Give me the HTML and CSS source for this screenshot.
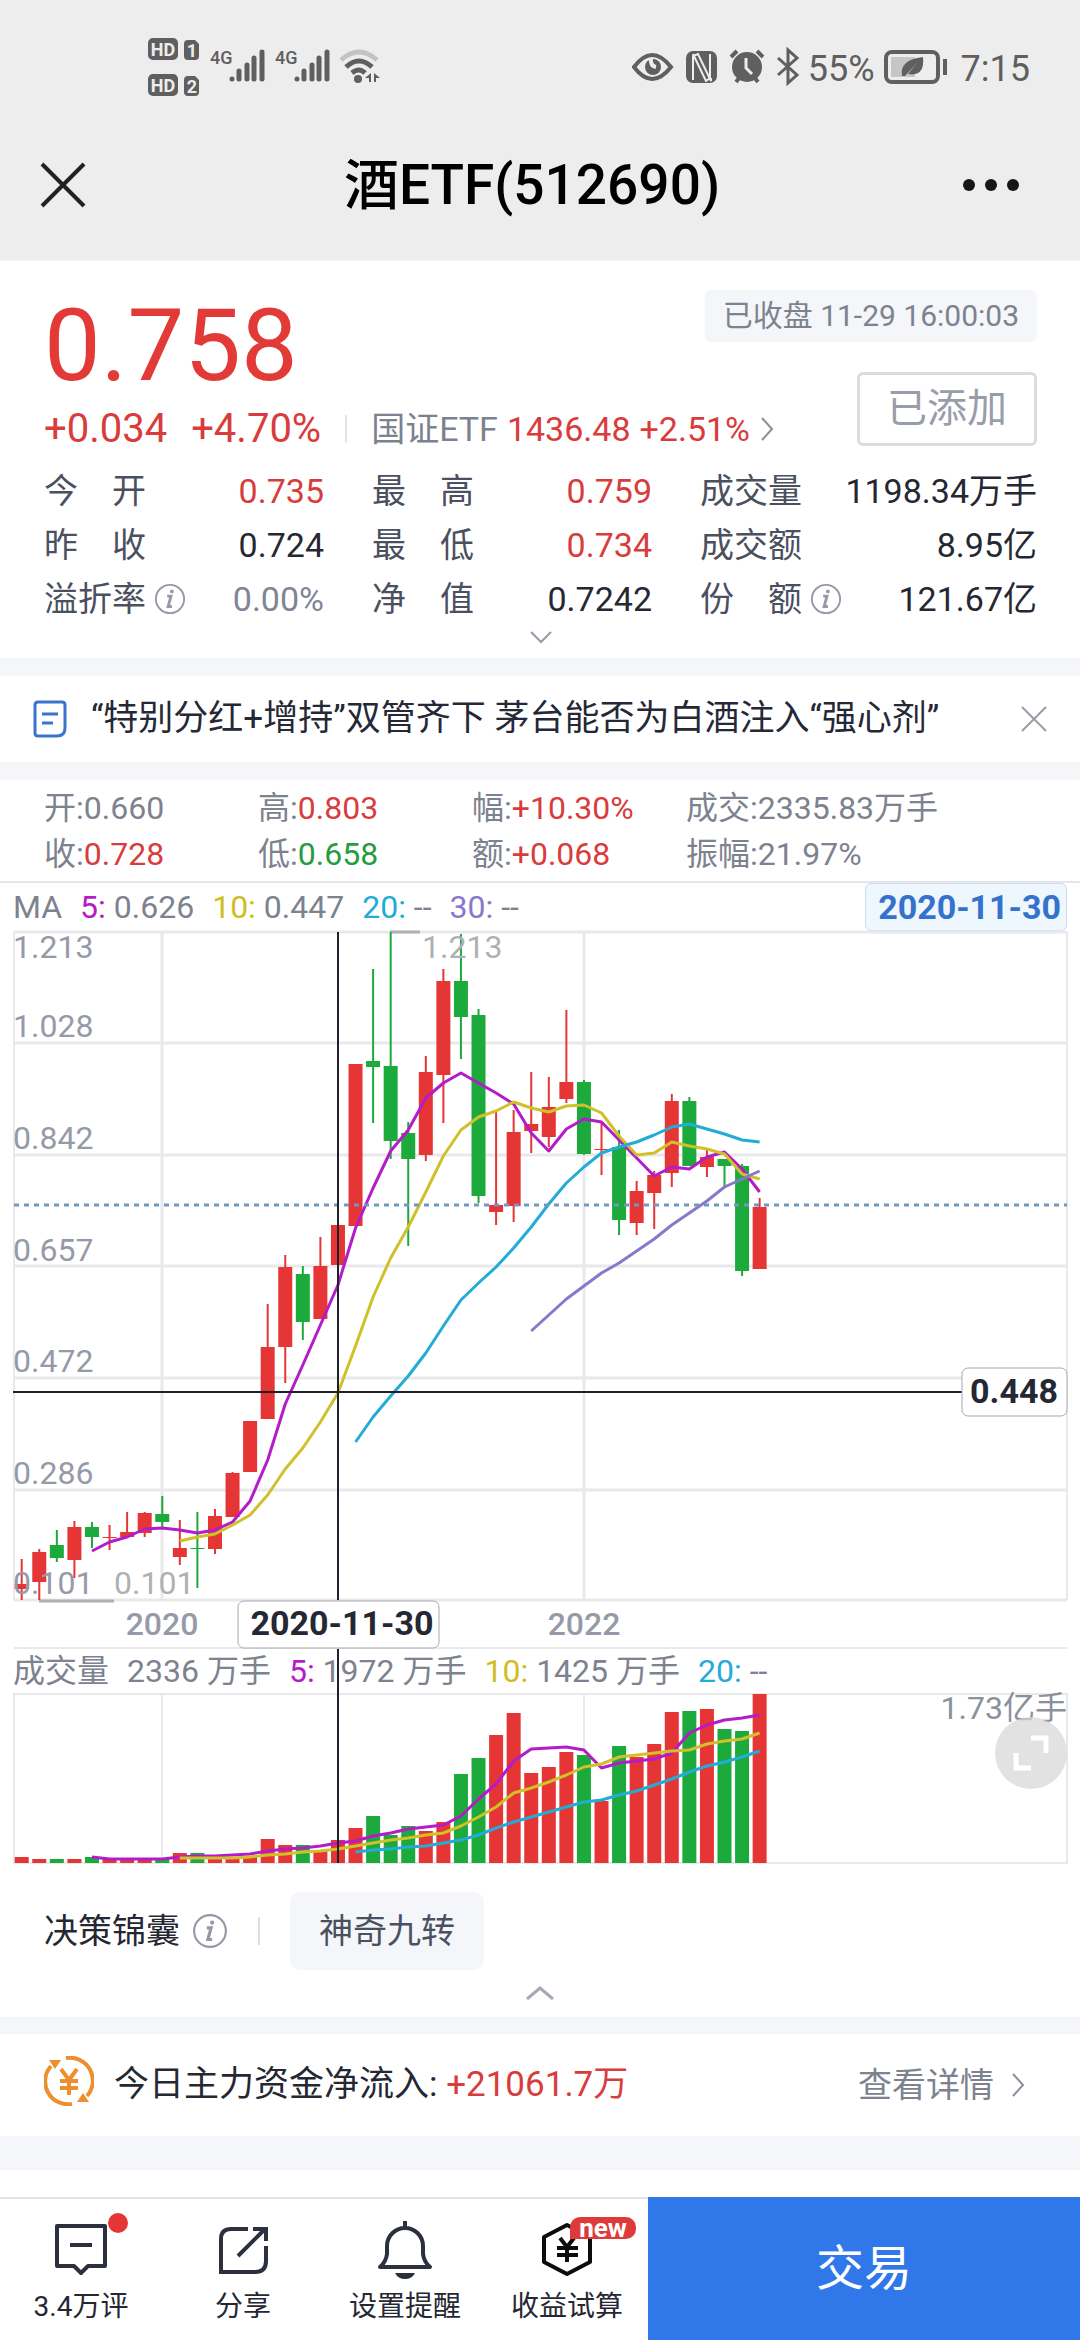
FILE: index.html
```html
<!DOCTYPE html>
<html lang="zh-CN">
<head>
<meta charset="utf-8">
<meta name="viewport" content="width=device-width, initial-scale=1">
<title>酒ETF(512690)</title>
<link rel="stylesheet" href="styles.css">
</head>
<body>
<header class="top">
  <div class="status">
    <svg class="status-icons" width="234" height="64" viewBox="148 35 234 64" role="img" aria-label="信号">
      <g fill="#5f5f5f">
        <rect x="148" y="38" width="30" height="22" rx="5"/><path d="M188 40h7l4 4v12q0 4-4 4h-7q-4 0-4-4V44q0-4 4-4z"/>
        <rect x="148" y="74" width="30" height="22" rx="5"/><path d="M188 76h7l4 4v12q0 4-4 4h-7q-4 0-4-4V80q0-4 4-4z"/>
      </g>
      <g class="badge-text" text-anchor="middle">
        <text x="163" y="56">HD</text><text x="192" y="57">1</text>
        <text x="163" y="92">HD</text><text x="192" y="93">2</text>
      </g>
      <g class="net-text"><text x="210" y="64">4G</text><text x="275" y="64">4G</text></g>
      <g stroke="#5f5f5f" stroke-width="5" stroke-linecap="round">
        <path d="M232 79v0M239 71v8M247 65v14M254 58v21M262 52v27"/>
        <path d="M297 79v0M304 71v8M312 65v14M319 58v21M327 52v27"/>
      </g>
      <g fill="none" stroke-width="5">
        <path d="M341 60q18-16 36 0" stroke="#c3c3c3"/>
        <path d="M346 67q13-12 26 0" stroke="#5f5f5f"/>
        <path d="M352 73q7-6 13 0" stroke="#5f5f5f"/>
      </g>
      <circle cx="358" cy="79" r="4" fill="#5f5f5f"/>
      <path d="M371 73v9h-2v-4h-4zM374 73l6 5h-4v4h-2z" fill="#5f5f5f"/>
    </svg>
    <div class="status-right">
      <svg width="168" height="40" viewBox="632 47 168 40" role="img" aria-label="护眼 NFC 闹钟 蓝牙">
        <path d="M634 67q18-24 37 0q-19 24-37 0z" fill="none" stroke="#5f5f5f" stroke-width="4"/>
        <circle cx="653" cy="67" r="8" fill="#5f5f5f"/><path d="M651 58q-1 8 5 9" stroke="#ededed" stroke-width="4" fill="none"/>
        <rect x="686" y="51" width="31" height="32" rx="7" fill="#5f5f5f"/>
        <path d="M693 80V56l5-2 13 27v-3M710 54v24l-4 3-13-27" fill="none" stroke="#ededed" stroke-width="2"/>
        <circle cx="747" cy="67" r="15" fill="#5f5f5f"/>
        <path d="M746 58v10l6 6" stroke="#ededed" stroke-width="3" fill="none"/>
        <path d="M731 57l6-6M763 57l-6-6M736 82l4-5M758 82l-4-5" stroke="#5f5f5f" stroke-width="4"/>
        <path d="M778 58l19 17-9 8V50l9 8-19 17" fill="none" stroke="#5f5f5f" stroke-width="3"/>
      </svg>
      <span class="battery">55%</span>
      <svg width="64" height="36" viewBox="882 49 64 36" role="img" aria-label="电池">
        <rect x="885" y="52" width="52" height="30" rx="6" fill="none" stroke="#5f5f5f" stroke-width="4"/>
        <rect x="890" y="57" width="24" height="20" fill="#c6c6c6"/>
        <path d="M901 76q-3-16 21-19q2 20-15 17l9-11-12 13z" fill="#5f5f5f"/>
        <path d="M944 59v16" stroke="#5f5f5f" stroke-width="4"/>
      </svg>
      <time class="clock">7:15</time>
    </div>
  </div>
  <div class="titlebar">
    <button class="icon-btn" aria-label="关闭"><svg width="46" height="46" viewBox="0 0 46 46"><path d="M2 2l42 42M44 2L2 44" stroke="#222" stroke-width="4"/></svg></button>
    <h1>酒ETF(512690)</h1>
    <button class="icon-btn" aria-label="更多"><svg width="58" height="14" viewBox="0 0 58 14" fill="#161616"><circle cx="7" cy="7" r="6"/><circle cx="29" cy="7" r="6"/><circle cx="51" cy="7" r="6"/></svg></button>
  </div>
</header>

<main>
  <section class="quote">
    <div class="quote-top">
      <div class="quote-main">
        <div class="price">0.758</div>
        <div class="change">
          <span class="chg">+0.034</span><span class="chg">+4.70%</span>
          <a class="index" href="#index"><span>国证ETF</span><span class="up">1436.48</span><span class="up">+2.51%</span>
            <svg width="16" height="28" viewBox="0 0 16 28"><path d="M3 3l10 11L3 25" fill="none" stroke="#8a8f9c" stroke-width="2"/></svg></a>
        </div>
      </div>
      <div class="quote-side">
        <span class="tag">已收盘 11-29 16:00:03</span>
        <button class="added">已添加</button>
      </div>
    </div>
    <dl class="stats">
      <div><dt><span>今</span><span>开</span></dt><dd class="up">0.735</dd></div>
      <div><dt><span>最</span><span>高</span></dt><dd class="up">0.759</dd></div>
      <div><dt>成交量</dt><dd>1198.34万手</dd></div>
      <div><dt><span>昨</span><span>收</span></dt><dd>0.724</dd></div>
      <div><dt><span>最</span><span>低</span></dt><dd class="up">0.734</dd></div>
      <div><dt>成交额</dt><dd>8.95亿</dd></div>
      <div><dt>溢折率</dt><svg class="info" viewBox="0 0 34 34"><use href="#i-info"/></svg><dd class="flat">0.00%</dd></div>
      <div><dt><span>净</span><span>值</span></dt><dd>0.7242</dd></div>
      <div><dt><span>份</span><span>额</span></dt><svg class="info" viewBox="0 0 34 34"><use href="#i-info"/></svg><dd>121.67亿</dd></div>
    </dl>
    <button class="expand" aria-label="展开"><svg width="26" height="16" viewBox="0 0 26 16"><path d="M3 3l10 10L23 3" fill="none" stroke="#969baa" stroke-width="2"/></svg></button>
  </section>

  <section class="news">
    <svg width="34" height="38" viewBox="0 0 34 38" fill="none" stroke="#3a74cc" stroke-width="3"><path d="M2 5q0-3 3-3h24q3 0 3 3v23q0 8-8 8H5q-3 0-3-3zM9 14h16M9 23h11"/></svg>
    <a href="#news">“特别分红+增持”双管齐下 茅台能否为白酒注入“强心剂”</a>
    <button class="icon-btn" aria-label="关闭资讯"><svg width="26" height="26" viewBox="0 0 26 26"><path d="M1 1l24 24M25 1L1 25" stroke="#9a9da6" stroke-width="2"/></svg></button>
  </section>

  <section class="ohlc">
    <span>开:0.660</span><span>高:<b class="up">0.803</b></span><span>幅:<b class="up">+10.30%</b></span><span>成交:2335.83万手</span>
    <span>收:<b class="up">0.728</b></span><span>低:<b class="down">0.658</b></span><span>额:<b class="up">+0.068</b></span><span>振幅:21.97%</span>
  </section>

  <section class="charts">
    <div class="legend ma">
      <span>MA</span>
      <span><b class="c5">5:</b> 0.626</span><span><b class="c10">10:</b> 0.447</span><span><b class="c20">20:</b> --</span><span><b class="c30">30:</b> --</span>
      <time class="date">2020-11-30</time>
    </div>
    <svg class="plot" viewBox="0 931 1080 718" role="img" aria-label="K线图">
      <g stroke="#e9e9eb" stroke-width="3" fill="none">
        <path d="M14 932H1067M14 1043H1067M14 1155H1067M14 1266H1067M14 1378H1067M14 1490H1067M14 1600H1067"/>
        <path d="M14 932V1600M1067 932V1600M14 1648H1067" stroke-width="2"/>
        <path d="M162 932V1600M584 932V1600"/>
      </g>
      <path d="M390 932H420M39 1601H114" stroke="#b0b0b0" stroke-width="3"/>
      <g id="candles"></g>
      <g id="price-lines" fill="none" stroke-width="3" stroke-linejoin="round"></g>
      <path d="M14 1205H1067" stroke="#6f99c4" stroke-width="3" stroke-dasharray="5 5"/>
      <g class="axis">
        <text x="13" y="958">1.213</text><text x="13" y="1037">1.028</text><text x="13" y="1149">0.842</text><text x="13" y="1261">0.657</text>
        <text x="13" y="1372">0.472</text><text x="13" y="1484">0.286</text><text x="13" y="1594">0.101</text>
        <text class="mark" x="422" y="958">1.213</text><text class="mark" x="114" y="1594">0.101</text>
        <text class="year" x="162" y="1635">2020</text><text class="year" x="584" y="1635">2022</text>
      </g>
      <path d="M13 1392H962M338 932V1600" stroke="#20202c" stroke-width="2"/>
      <g fill="#fff" stroke="#a9a9ae">
        <rect x="238" y="1601" width="201" height="47" rx="6"/><rect x="962" y="1368" width="105" height="48" rx="6"/>
      </g>
      <g class="cursor"><text x="342" y="1635">2020-11-30</text><text x="1014" y="1403">0.448</text></g>
    </svg>
    <div class="legend vol">
      <span>成交量</span><span>2336 万手</span>
      <span><b class="c5">5:</b> 1972 万手</span><span><b class="c10">10:</b> 1425 万手</span><span><b class="c20">20:</b> --</span>
    </div>
    <div class="volume">
      <svg class="plot" viewBox="0 1693 1080 171" role="img" aria-label="成交量图">
        <path d="M14 1694H1067V1863H14zM162 1694V1863M584 1694V1863" stroke="#e9e9eb" stroke-width="2" fill="none"/>
        <g id="bars"></g>
        <g id="volume-lines" fill="none" stroke-width="3" stroke-linejoin="round"></g>
        <text class="vol-max" x="1067" y="1719">1.73亿手</text>
        <path d="M338 1649V1863" stroke="#20202c" stroke-width="2"/>
      </svg>
      <button class="fullscreen" aria-label="全屏"><svg width="36" height="36" viewBox="0 0 36 36" fill="none" stroke="#fff" stroke-width="5"><path d="M18 3h15v15M3 18v15h15"/></svg></button>
    </div>
  </section>

  <section class="tips">
    <div class="tips-row">
      <span>决策锦囊</span><svg class="info" viewBox="0 0 34 34"><use href="#i-info"/></svg>
      <button class="chip">神奇九转</button>
    </div>
    <button class="expand" aria-label="收起"><svg width="30" height="16" viewBox="0 0 30 16"><path d="M2 14L15 3l13 11" fill="none" stroke="#a5a9b5" stroke-width="3"/></svg></button>
  </section>

  <section class="fund">
    <svg width="50" height="50" viewBox="0 0 50 50" fill="none" stroke="#ee8f2f" stroke-width="4">
      <path d="M22 2A23 23 0 0 1 43 40M28 48A23 23 0 0 1 7 10"/><path d="M5 4h12l-6 9zM45 46H33l6-9z" fill="#ee8f2f" stroke="none"/>
      <path d="M17 13l8 11 8-11M25 24v15M16 25h18M16 32h18"/>
    </svg>
    <span>今日主力资金净流入: <b class="up">+21061.7万</b></span>
    <a href="#detail">查看详情<svg width="16" height="28" viewBox="0 0 16 28"><path d="M3 3l10 11L3 25" fill="none" stroke="#8a8f9c" stroke-width="2"/></svg></a>
  </section>
  <section class="more"></section>
</main>

<footer class="bar">
  <a href="#comments"><span class="bar-icon"><svg width="60" height="60" viewBox="51 2219 60 60" fill="none" stroke="#2c2f3e" stroke-width="4"><path d="M57 2226h48v40H88l-7 7-7-7H57z" stroke-linejoin="round"/><path d="M70 2245h22"/></svg><i class="dot"></i></span>3.4万评</a>
  <a href="#share"><span class="bar-icon"><svg width="60" height="60" viewBox="213 2219 60 60" fill="none" stroke="#2c2f3e" stroke-width="4"><path d="M248 2229H231q-10 0-10 10v33h34q11 0 11-11V2246M238 2256l27-27M253 2229h13v12"/></svg></span>分享</a>
  <a href="#alert"><span class="bar-icon"><svg width="60" height="60" viewBox="375 2219 60 60" fill="none" stroke="#2c2f3e" stroke-width="4"><path d="M405 2221v6M387 2254V2246a18 18 0 0 1 36 0v8q1 8 7 13H380q6-5 7-13z" stroke-linejoin="round"/><path d="M395 2273h20q-3 6-10 6t-10-6z" fill="#2c2f3e" stroke="none"/></svg></span>设置提醒</a>
  <a href="#calc"><span class="bar-icon"><svg width="60" height="60" viewBox="537 2219 60 60" fill="none" stroke="#0c0c0f" stroke-width="4"><path d="M567 2225l23 12v25l-23 12-23-12v-25z" stroke-linejoin="round"/><path d="M560 2238l7 9 7-9M567 2247v15M557 2248h21M557 2255h21"/></svg><i class="new">new</i></span>收益试算</a>
  <button class="trade">交易</button>
</footer>

<svg width="0" height="0" class="defs"><symbol id="i-info" viewBox="0 0 34 34"><circle cx="17" cy="17" r="15" fill="none" stroke="#9599a6" stroke-width="2"/><path d="M14 14h4l-3 11h4" fill="none" stroke="#9599a6" stroke-width="3"/><circle cx="19" cy="9" r="2" fill="#9599a6"/></symbol></svg>
<script src="chart.js"></script>
</body>
</html>
```
FILE: chart.js
```js
// Each row: direction, high, body top, body bottom, low, volume top.
const rows = [
  ['r',1559,1584,1589,1600,1857],['r',1549,1552,1582,1600,1859],['g',1530,1545,1558,1562,1859],['r',1521,1527,1560,1578,1859],
  ['g',1522,1527,1537,1548,1857],['r',1525,1537,1538,1550,1859],['r',1512,1532,1537,1537,1859],['r',1512,1513,1533,1537,1859],
  ['g',1496,1514,1522,1527,1859],['r',1520,1548,1557,1565,1853],['g',1512,1548,1549,1588,1853],['r',1509,1516,1549,1554,1857],
  ['r',1472,1473,1517,1517,1857],['r',1421,1421,1472,1472,1857],['r',1304,1347,1419,1419,1839],['r',1255,1267,1347,1383,1845],
  ['g',1266,1274,1322,1340,1845],['r',1237,1266,1319,1319,1851],['r',1225,1225,1265,1265,1840],['r',1064,1064,1226,1226,1828],
  ['g',969,1061,1067,1123,1816],['g',932,1066,1141,1159,1835],['g',1122,1133,1159,1246,1826],['r',1056,1072,1155,1161,1831],
  ['r',969,981,1075,1123,1822],['g',934,981,1017,1059,1774],['g',1009,1015,1196,1203,1758],['r',1112,1205,1212,1225,1735],
  ['r',1110,1132,1206,1222,1713],['r',1072,1124,1131,1153,1773],['r',1077,1107,1137,1147,1767],['r',1010,1082,1099,1103,1752],
  ['g',1080,1082,1154,1155,1755],['r',1122,1149,1150,1175,1801],['g',1130,1147,1220,1235,1746],['r',1181,1191,1223,1235,1757],
  ['r',1171,1175,1193,1229,1744],['r',1094,1101,1173,1187,1712],['g',1097,1101,1166,1166,1711],['r',1150,1157,1167,1177,1709],
  ['g',1159,1159,1166,1188,1729],['g',1164,1166,1271,1276,1731],['r',1198,1207,1269,1269,1694]
];
const colors = { r: '#e63535', g: '#1daa3d' };
const ma = { m5: '#b41cc9', m10: '#d0c02a', m20: '#22acd6', m30: '#8878cc' };
const priceLines = [
  [ma.m5, 4, [1551,1542,1537,1529,1528,1530,1533,1530,1522,1501,1460,1404,1365,1325,1285,1228,1188,1151,1130,1098,1083,1073,1083,1093,1104,1133,1151,1129,1119,1122,1140,1158,1176,1167,1169,1157,1152,1169,1192]],
  [ma.m10, 9, [1541,1537,1534,1525,1515,1495,1469,1448,1422,1393,1346,1297,1258,1227,1192,1156,1130,1117,1111,1102,1108,1112,1106,1105,1113,1136,1155,1153,1142,1146,1149,1154,1174,1179]],
  [ma.m20, 19, [1442,1417,1396,1376,1353,1326,1300,1283,1267,1248,1227,1204,1183,1167,1153,1147,1142,1135,1127,1124,1129,1134,1140,1142]],
  [ma.m30, 29, [1331,1315,1299,1286,1273,1263,1251,1239,1225,1213,1201,1187,1179,1171]]
];
const volumeLines = [
  [ma.m5, 4, [1857,1859,1859,1859,1859,1857,1856,1856,1855,1854,1851,1849,1848,1846,1843,1841,1836,1833,1829,1827,1825,1816,1799,1784,1761,1749,1748,1747,1750,1768,1763,1761,1759,1753,1733,1725,1720,1718,1715]],
  [ma.m10, 9, [1858,1858,1858,1858,1857,1855,1854,1852,1851,1849,1846,1843,1840,1838,1835,1833,1826,1817,1807,1793,1788,1782,1775,1767,1764,1757,1755,1753,1751,1750,1744,1741,1739,1733]],
  [ma.m20, 19, [1852,1850,1849,1847,1846,1843,1840,1835,1828,1822,1817,1812,1807,1802,1800,1795,1791,1785,1779,1772,1766,1762,1757,1751]]
];
const x = i => 21.7 + i * 17.57;
const add = (id, tag, attrs) => {
  const el = document.createElementNS('http://www.w3.org/2000/svg', tag);
  for (const k in attrs) el.setAttribute(k, attrs[k]);
  document.getElementById(id).append(el);
};
rows.forEach(([dir, high, top, bottom, low, vol], i) => {
  const fill = colors[dir];
  add('candles', 'rect', { x: x(i) - 1, y: high, width: 2, height: low - high, fill });
  add('candles', 'rect', { x: x(i) - 7, y: top, width: 14, height: bottom - top, fill });
  add('bars', 'rect', { x: x(i) - 7, y: vol, width: 14, height: 1863 - vol, fill });
});
const draw = (id, lines) => lines.forEach(([stroke, start, ys]) =>
  add(id, 'polyline', { stroke, points: ys.map((y, i) => x(start + i) + ',' + y).join(' ') }));
draw('price-lines', priceLines);
draw('volume-lines', volumeLines);
```
FILE: styles.css
```css
* { box-sizing: border-box; }
body {
  margin: 0;
  min-height: 100vh;
  display: flex;
  flex-direction: column;
  background: #f4f6fa;
  color: #252833;
  font: 34px/54px Roboto, "Noto Sans CJK SC", sans-serif;
}
svg { display: block; flex: none; }
.defs { position: absolute; }
button { border: 0; padding: 0; background: none; font: inherit; color: inherit; }
a { color: inherit; text-decoration: none; }
b { font-weight: 400; }
.up { color: #d83c3c; }
.down { color: #259c40; }

.top { background: #ededed; }
.status { display: flex; justify-content: space-between; align-items: center; padding: 35px 50px 0 148px; }
.badge-text { font-size: 18px; font-weight: 700; fill: #ededed; }
.net-text { font-size: 18px; font-weight: 500; fill: #5f5f5f; }
.status-right { display: flex; align-items: center; color: #5f5f5f; font-size: 36px; line-height: 42px; }
.battery, .clock { padding-top: 3px; }
.battery { margin: 0 8px; }
.clock { margin-left: 14px; }
.titlebar { display: flex; justify-content: space-between; align-items: center; padding: 50px 60px 39px 40px; }
.titlebar h1 { margin: 0; padding-left: 16px; font-size: 55px; line-height: 72px; font-weight: 500; color: #000; }
.icon-btn { display: flex; align-items: center; }

.quote { background: #fff; padding: 29px 43px 10px 44px; border-top: 1px solid #f4f4f6; }
.quote-top { display: flex; justify-content: space-between; white-space: nowrap; }
.price { font-size: 101px; line-height: 112px; color: #e23a37; }
.change { display: flex; align-items: center; line-height: 54px; color: #d83c3c; }
.chg { font-size: 40px; margin-right: 24px; }
.index { display: flex; align-items: center; gap: 9px; padding-left: 26px; background: linear-gradient(#e3e3e8, #e3e3e8) 0 50% / 2px 28px no-repeat; color: #7c818f; font-size: 34px; }
.quote-side { display: flex; flex-direction: column; align-items: flex-end; gap: 30px; margin-left: -160px; }
.tag { padding: 0 18px; line-height: 52px; font-size: 30px; border-radius: 6px; background: #f4f6f9; color: #7d828f; }
.added { width: 180px; height: 74px; border: 3px solid #dcdcde; border-radius: 6px; font-size: 40px; color: #989da9; line-height: 68px; }
.stats { display: grid; grid-template-columns: 280fr 280fr 337fr; column-gap: 48px; margin: 8px 0 0; }
.stats div { display: flex; align-items: center; }
.stats dt { width: 102px; display: flex; justify-content: space-between; color: #4b5060; }
.stats dd { margin: 0 0 0 auto; }
.stats .flat { color: #7f8594; }
.info { width: 32px; height: 32px; margin-left: 8px; }
.expand { display: flex; justify-content: center; align-items: center; width: 100%; height: 22px; }

.news { display: flex; align-items: center; gap: 24px; margin: 18px 0; padding: 0 33px; min-height: 86px; background: #fff; font-size: 35px; }
.news a { flex: 1; color: #252836; }

.ohlc { display: grid; grid-template-columns: 214fr 214fr 214fr 350fr; padding: 5px 44px 4px; border-bottom: 2px solid #e6e6e8; background: #fff; font-size: 32px; line-height: 46px; color: #7d828f; }

.charts { background: #fff; }
.legend { display: flex; gap: 18px; padding: 0 13px; font-size: 32px; color: #7d828f; }
.ma { line-height: 48px; }
.vol { line-height: 44px; }
.date { margin-left: auto; padding: 0 5px 0 12px; border: 1px solid #cbdcf3; border-radius: 6px; background: #eef6fe; color: #3572cc; font-size: 34px; font-weight: 700; line-height: 46px; }
.c5 { color: #b41cc9; }
.c10 { color: #cfbd22; }
.c20 { color: #22acd6; }
.c30 { color: #8878cc; }
.plot { width: 100%; height: auto; overflow: visible; }
.axis { font-size: 32px; fill: #969aa8; }
.axis .mark { fill: #b0b0b2; }
.axis .year { text-anchor: middle; font-weight: 500; }
.cursor { font-size: 34px; font-weight: 700; fill: #252833; text-anchor: middle; }
.vol-max { font-size: 32px; fill: #8b909d; text-anchor: end; }
.volume { position: relative; }
.fullscreen { position: absolute; right: 13px; top: 24px; width: 72px; height: 72px; border-radius: 50%; background: rgba(215, 215, 215, .72); display: flex; align-items: center; justify-content: center; }

.tips { background: #fff; padding: 28px 44px 13px; }
.tips-row { display: flex; align-items: center; }
.tips-row .info { width: 36px; height: 36px; margin: 0 30px 0 12px; }
.chip { position: relative; margin-left: 32px; padding: 0 29px; height: 78px; border-radius: 10px; background: #f4f6f9; color: #4b5060; }
.chip::before { content: ""; position: absolute; left: -32px; top: 25px; width: 2px; height: 28px; background: #dedee3; }
.tips .expand { margin-top: 12px; }

.fund { display: flex; align-items: center; margin-top: 17px; padding: 0 54px 0 44px; min-height: 102px; background: #fff; }
.fund > svg { margin-bottom: 8px; }
.fund span { margin-left: 20px; font-size: 35px; }
.fund a { display: flex; align-items: center; gap: 16px; margin-left: auto; color: #7d828f; }
.more { height: 27px; margin-top: 34px; background: #fff; }

.bar { position: sticky; bottom: 0; display: grid; grid-template-columns: repeat(4, 15fr) 40fr; margin-top: auto; height: 143px; border-top: 2px solid #e2e2e4; background: #fff; font-size: 28px; line-height: 40px; }
.bar a { display: flex; flex-direction: column; align-items: center; gap: 8px; padding-top: 20px; }
.bar-icon { position: relative; }
.dot { position: absolute; right: -17px; top: -6px; width: 20px; height: 20px; border-radius: 50%; background: #e63535; }
.new { position: absolute; left: 33px; top: -2px; width: 66px; height: 22px; border-radius: 10px 10px 10px 0; background: #df3a3a; color: #fff; font: 700 26px/22px Roboto, sans-serif; text-align: center; }
.trade { margin-top: -2px; background: #3077ea; color: #fff; font-size: 48px; }
```
